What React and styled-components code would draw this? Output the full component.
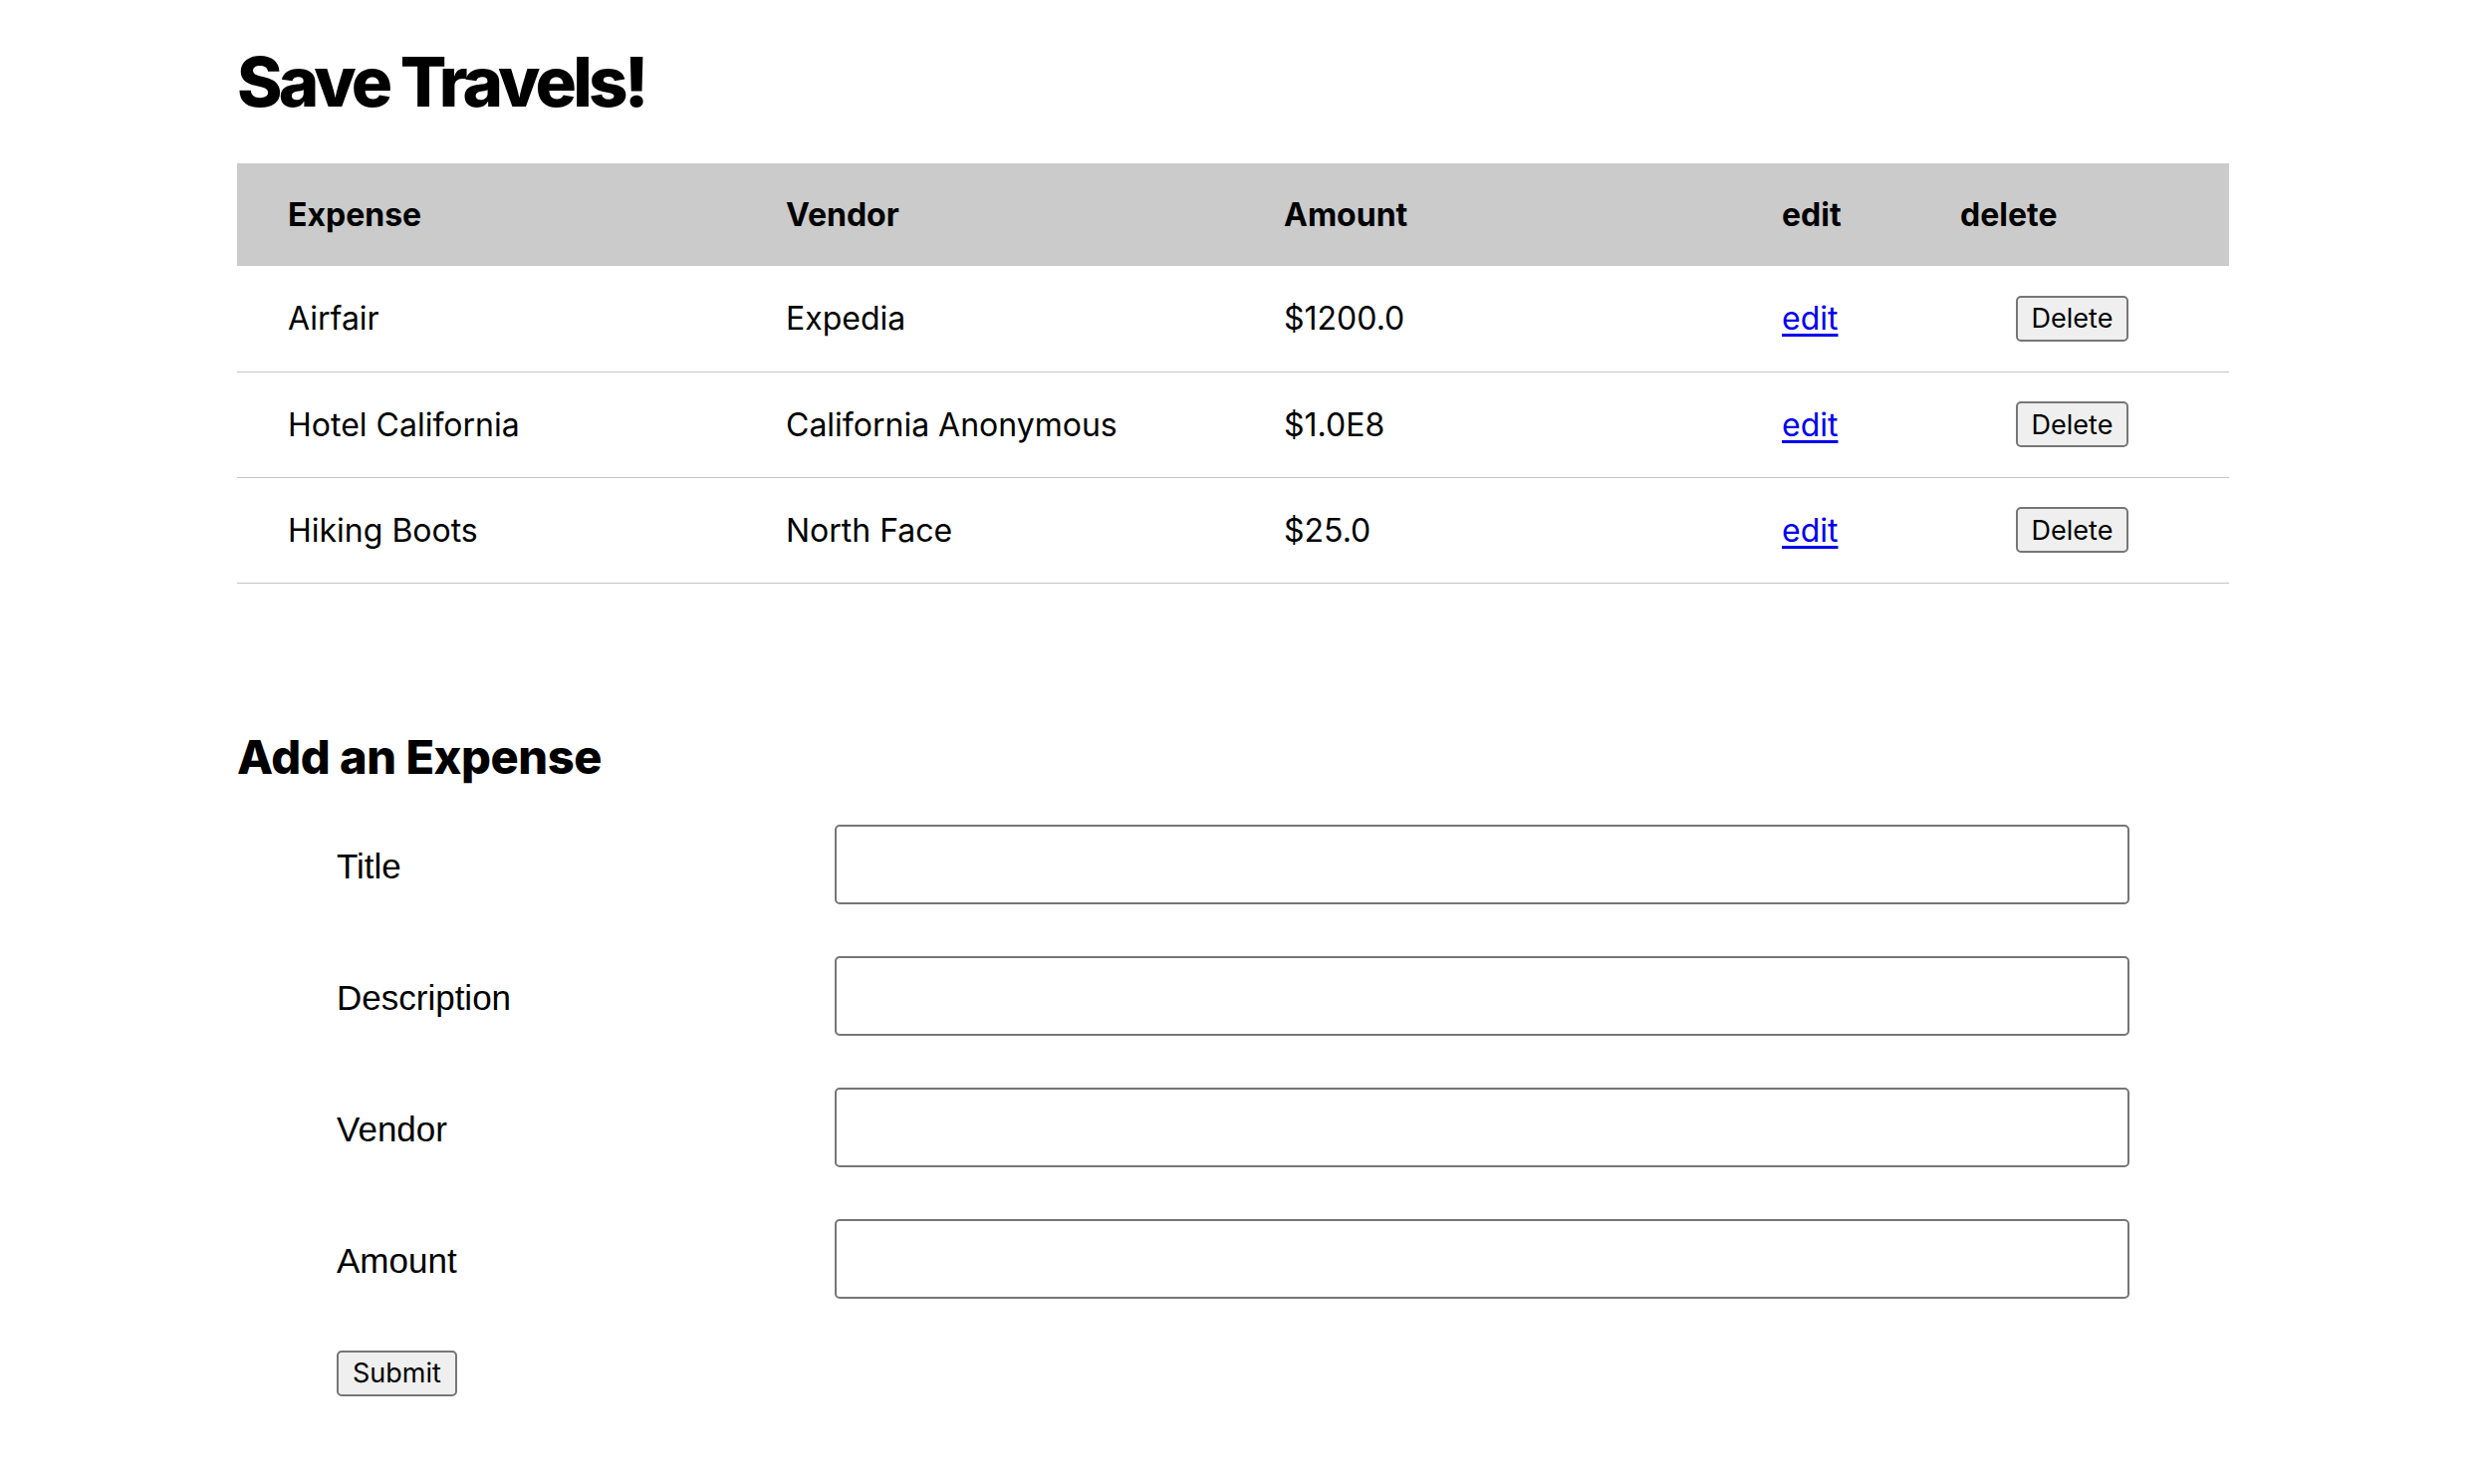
import React from 'react';
import styled, { createGlobalStyle } from "styled-components";

const GlobalStyle = createGlobalStyle`
  body {
    margin: 0;
    background: #fff;
    color: #000;
    font-family: Inter, "Noto Sans", sans-serif;
  }
`;

const Page = styled.div`
  width: 2000px;
  padding: 48px 0 80px 238px;
  display: flex;
  flex-direction: column;
`;

const Title = styled.h1`
  margin: 0 0 47px 0;
  font-size: 69px;
  line-height: 1;
  font-weight: 800;
  letter-spacing: -0.055em;
`;

const SubTitle = styled.h2`
  margin: 150px 0 45px 0;
  font-size: 47px;
  line-height: 1;
  font-weight: 800;
  letter-spacing: -0.01em;
`;

const Table = styled.table`
  width: 2000px;
  border-collapse: collapse;
  table-layout: fixed;
  font-size: 32px;
`;

const HeadRow = styled.tr`
  background: #cbcbcb;
  height: 103px;
`;

const Th = styled.th`
  text-align: left;
  padding: 0 0 0 51px;
  font-weight: 700;
`;

const Row = styled.tr`
  height: 106px;
  border-bottom: 1px solid #c6c6c6;
`;

const Td = styled.td`
  padding: 0 0 0 51px;
  text-align: ${({ $center }) => ($center ? "center" : "left")};
  ${({ $center }) => $center && "padding: 0 0 0 6px;"}
`;

const EditLink = styled.a`
  color: #0000ee;
  text-decoration: underline;
  text-underline-offset: 4px;
`;

const GrayButton = styled.button`
  font-family: Inter, "Noto Sans", sans-serif;
  font-size: 27px;
  height: 46px;
  padding: 0 14px;
  background: #efefef;
  color: #000;
  border: 2px solid #767676;
  border-radius: 5px;
`;

const Form = styled.form`
  display: flex;
  flex-direction: column;
  gap: 52px;
  padding-left: 100px;
`;

const Field = styled.div`
  display: grid;
  grid-template-columns: 500px 1300px;
  align-items: center;
`;

const Label = styled.label`
  font-family: "Liberation Sans", Arial, sans-serif;
  font-size: 35px;
  padding-top: 4px;
`;

const Input = styled.input`
  box-sizing: border-box;
  height: 80px;
  width: 1300px;
  border: 2px solid #767676;
  border-radius: 5px;
  font-size: 28px;
`;

const SubmitRow = styled.div`
  display: flex;
`;

const expenses = [
  { id: 1, title: "Airfair", vendor: "Expedia", amount: "$1200.0" },
  { id: 2, title: "Hotel California", vendor: "California Anonymous", amount: "$1.0E8" },
  { id: 3, title: "Hiking Boots", vendor: "North Face", amount: "$25.0" },
];

const fields = ["Title", "Description", "Vendor", "Amount"];

const App = () => {
  return (
    <>
      <GlobalStyle />
      <Page>
        <Title>Save Travels!</Title>
        <Table>
          <colgroup>
            <col style={{ width: 500 }} />
            <col style={{ width: 500 }} />
            <col style={{ width: 500 }} />
            <col style={{ width: 179 }} />
            <col style={{ width: 321 }} />
          </colgroup>
          <thead>
            <HeadRow>
              <Th>Expense</Th>
              <Th>Vendor</Th>
              <Th>Amount</Th>
              <Th>edit</Th>
              <Th>delete</Th>
            </HeadRow>
          </thead>
          <tbody>
            {expenses.map(exp => (
              <Row key={exp.id}>
                <Td>{exp.title}</Td>
                <Td>{exp.vendor}</Td>
                <Td>{exp.amount}</Td>
                <Td><EditLink href="#">edit</EditLink></Td>
                <Td $center><GrayButton type="button">Delete</GrayButton></Td>
              </Row>
            ))}
          </tbody>
        </Table>

        <SubTitle>Add an Expense</SubTitle>
        <Form onSubmit={e => e.preventDefault()}>
          {fields.map(f => (
            <Field key={f}>
              <Label>{f}</Label>
              <Input type="text" />
            </Field>
          ))}
          <SubmitRow>
            <GrayButton type="submit">Submit</GrayButton>
          </SubmitRow>
        </Form>
      </Page>
    </>
  );
};

export default App;
